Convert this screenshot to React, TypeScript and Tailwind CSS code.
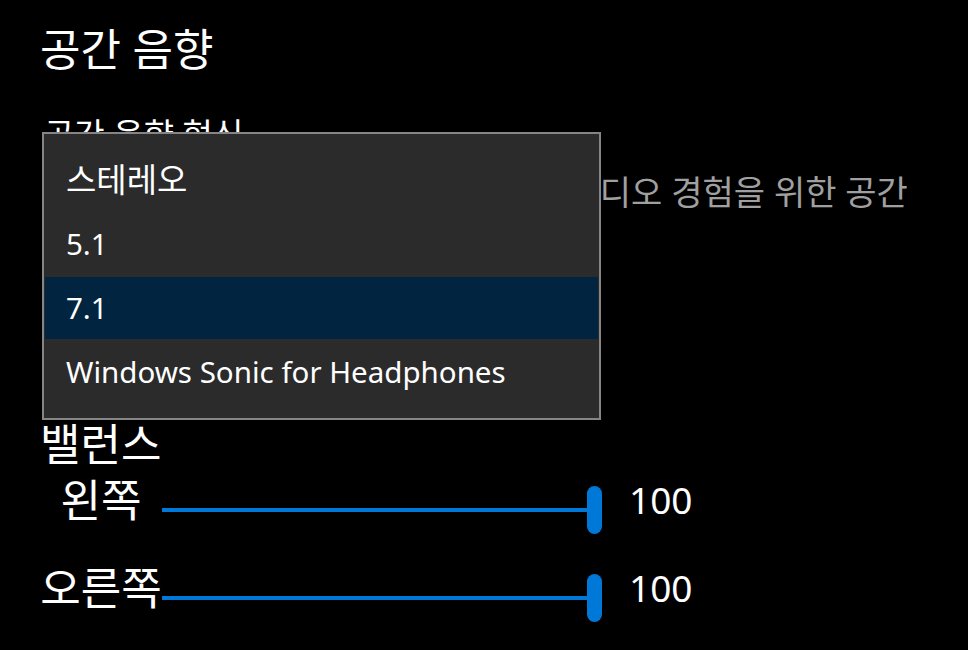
import React from "react";

const font = { fontFamily: '"Noto Sans", "Noto Sans CJK KR", sans-serif' };

function SliderRow({ label, value }: { label: string; value: number }) {
  return (
    <div className="flex h-[48px] items-center">
      <div className="w-[122px] self-start whitespace-nowrap text-center text-[44px] leading-[29px] text-white">{label}</div>
      <div className="flex h-[48px] w-[440px] items-center">
        <div className="h-[4px] flex-1 bg-[#0078d7]" />
        <div className="h-[48px] w-[15px] rounded-full bg-[#0078d7]" />
      </div>
      <div className="ml-[27px] self-start text-[37px] leading-[27px] text-white">{value}</div>
    </div>
  );
}

export default function App() {
  const items = [
    { t: "스테레오", size: "text-[33px]" },
    { t: "5.1", size: "text-[29.5px]" },
    { t: "7.1", size: "text-[29.5px]" },
    { t: "Windows Sonic for Headphones", size: "text-[29.5px]" },
  ];
  return (
    <div className="relative h-[650px] w-full overflow-hidden bg-black pl-[40px] text-white" style={font}>
      <div className="pt-[21px] text-[44px] leading-[56px]">공간 음향</div>
      <div className="mt-[37px] pl-[4px] text-[33px] leading-[42px]">공간 음향 형식</div>
      <div className="mt-[15px] pl-[24px] text-[34px] leading-[42px] text-[#a0a0a0]">
        <div className="whitespace-nowrap">더욱 사실적이면서 몰입감이 넘치는 오디오 경험을 위한 공간</div>
        <div className="whitespace-nowrap">음향 형식을 선택하세요.</div>
      </div>
      <div className="mt-[161px] text-[44px] leading-[56px]">밸런스</div>
      <div className="mt-[14px] flex flex-col gap-[40px]">
        <SliderRow label="왼쪽" value={100} />
        <SliderRow label="오른쪽" value={100} />
      </div>

      <div className="absolute left-[42px] top-[132px] w-[559px] border-2 border-[#858585] bg-[#2b2b2b] py-[14px]">
        {items.map((it) => (
          <div key={it.t} className="h-[64px] p-[1px]">
            <div
              className={
                "flex h-full items-center pl-[21px] text-white " +
                it.size +
                (it.t === "7.1" ? " bg-[#012540]" : "")
              }
            >
              {it.t}
            </div>
          </div>
        ))}
      </div>
    </div>
  );
}
